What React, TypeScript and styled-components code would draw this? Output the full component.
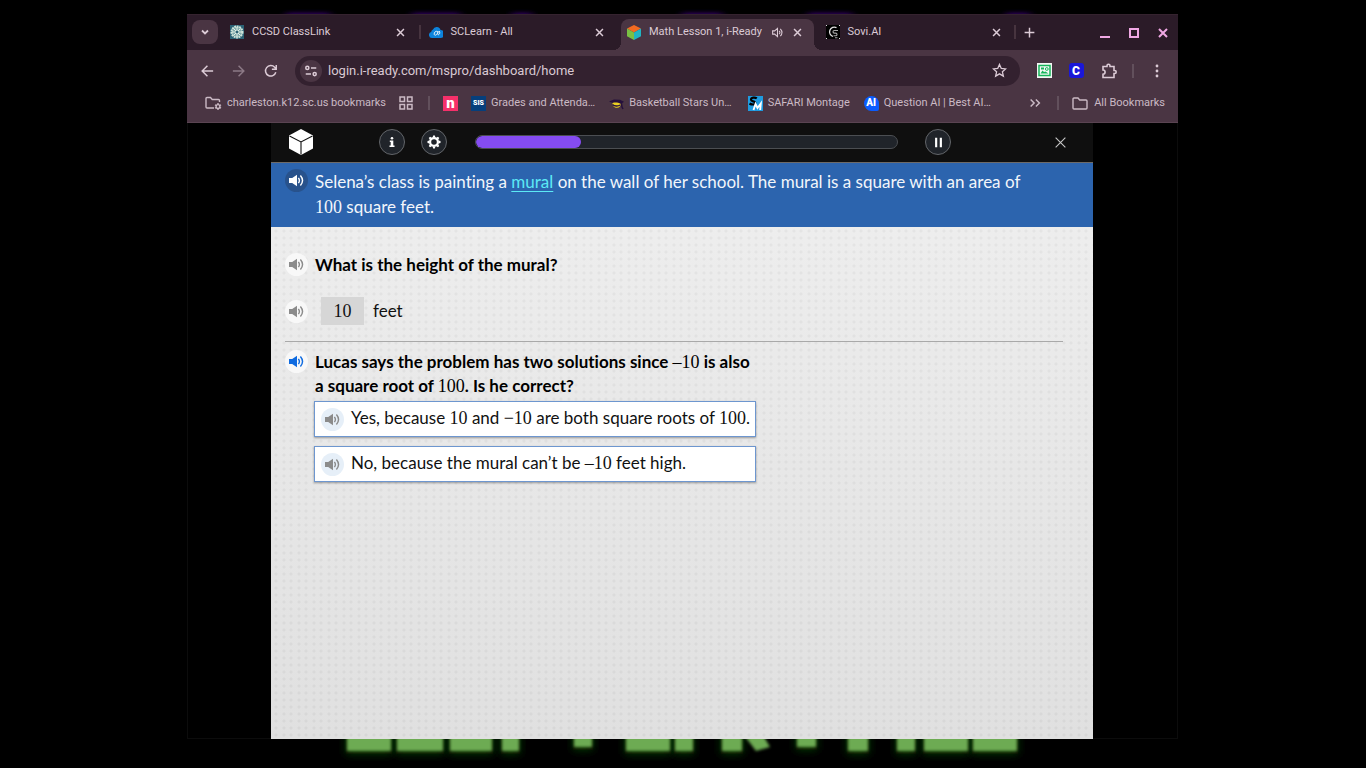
import React from 'react';
import styled, { createGlobalStyle, css } from 'styled-components';

const UI = `Roboto, 'Liberation Sans', sans-serif`;
const LESSON = `Lato, 'Open Sans', sans-serif`;
const MATH = `'Liberation Serif', 'Times New Roman', serif`;

const GlobalStyle = createGlobalStyle`
  *, *::before, *::after { box-sizing: border-box; }
  body { margin: 0; background: #000; }
  button, input { font: inherit; color: inherit; margin: 0; padding: 0; border: 0; background: none; }
  button { cursor: pointer; }
  a { color: inherit; text-decoration: none; }
  p, h2 { margin: 0; }
  svg { display: block; flex: none; }
`;

/* ---------- desktop and window ---------- */

const Desktop = styled.div`
  position: relative;
  display: grid;
  grid-template-columns: 187fr 991fr 188fr;
  min-height: 100vh;
  padding: 14px 0 29px;
  background: #000;
  overflow: hidden;
`;

const Wallpaper = styled.svg<{ $edge: 'top' | 'bottom' }>`
  position: absolute;
  left: 0;
  width: 100%;
  ${(p) => (p.$edge === 'top' ? 'top: 0; height: 20px;' : 'bottom: 0; height: 48px;')}
`;

const BrowserWindow = styled.div`
  position: relative;
  grid-column: 2;
  display: flex;
  flex-direction: column;
  min-width: 0;
  background: #000;
  font-family: ${UI};
  color: #dccbd6;
  box-shadow: inset 1px 0 #0c0c0c, inset -1px -1px #0c0c0c;
`;

/* ---------- tab strip ---------- */

const TabStrip = styled.div`
  display: flex;
  align-items: stretch;
  height: 36px;
  padding-left: 5px;
  background: #2b1b28;
  border-top: 1px solid #35232f;
`;

const TabSearch = styled.button`
  display: grid;
  place-items: center;
  flex: none;
  width: 26px;
  height: 24px;
  margin: 5px 4px 0 0;
  border-radius: 8px;
  background: #4a3543;
`;

const Tabs = styled.div`
  display: flex;
  flex: 0 1 794px;
  min-width: 0;
`;

const TabSlot = styled.div<{ $divider?: boolean }>`
  position: relative;
  display: flex;
  flex: 1 1 0;
  min-width: 0;
  padding: 4px 4px 0 2px;
  ${(p) => p.$divider && css`
    &::after {
      content: '';
      position: absolute;
      right: 0;
      top: 10px;
      width: 2px;
      height: 14px;
      background: #47343f;
    }
  `}
`;

const Tab = styled.div<{ $active?: boolean }>`
  position: relative;
  display: flex;
  align-items: center;
  gap: 4px;
  flex: 1;
  min-width: 0;
  padding: 0 8px 5px 6px;
  ${(p) => p.$active && css`
    background: #4a3543;
    border-radius: 8px 8px 0 0;
    &::before, &::after {
      content: '';
      position: absolute;
      bottom: 0;
      width: 8px;
      height: 8px;
    }
    &::before { left: -8px; background: radial-gradient(circle at 0 0, transparent 8px, #4a3543 8px); }
    &::after { right: -8px; background: radial-gradient(circle at 100% 0, transparent 8px, #4a3543 8px); }
  `}
`;

const TabTitle = styled.button`
  display: flex;
  align-items: center;
  gap: 8px;
  flex: 1;
  min-width: 0;
  font-size: 11px;
  line-height: 16px;
  white-space: nowrap;
  text-align: left;
`;

const IconButton = styled.button<{ $w?: number }>`
  display: grid;
  place-items: center;
  flex: none;
  width: ${(p) => p.$w ?? 16}px;
  height: 16px;
`;

const NewTab = styled(IconButton)`
  margin: 9px 0 0 5px;
`;

const WindowControls = styled.div`
  display: flex;
  gap: 13px;
  margin: 10px 7px 0 auto;
  color: #f0a8e4;
`;

/* ---------- toolbar ---------- */

const Toolbar = styled.div`
  display: flex;
  align-items: center;
  height: 41px;
  padding: 0 13px 0 12px;
  background: #4a3543;
`;

const NavButtons = styled.div`
  display: flex;
  gap: 16px;
  margin-right: 16px;
`;

const Omnibox = styled.form`
  display: flex;
  align-items: center;
  flex: 1;
  min-width: 0;
  height: 30px;
  padding: 0 13px 0 5px;
  border-radius: 15px;
  background: #33212f;
`;

const SiteInfo = styled.button`
  display: grid;
  place-items: center;
  flex: none;
  width: 22px;
  height: 22px;
  margin-right: 6px;
  border-radius: 50%;
  background: #4a3543;
`;

const UrlInput = styled.input`
  flex: 1;
  min-width: 0;
  height: 20px;
  font-size: 13px;
  line-height: 20px;
  outline: none;
  color: #d9c9d3;
`;

const Extensions = styled.div`
  display: flex;
  align-items: center;
  gap: 16px;
  margin: 0 14px 0 16px;
`;

const Rule = styled.span`
  flex: none;
  width: 2px;
  height: 14px;
  background: #62505c;
`;

const MenuButton = styled(IconButton)`
  margin-left: 15px;
`;

const BookmarkBar = styled.nav`
  display: flex;
  align-items: center;
  height: 32px;
  padding: 0 13px 7px 18px;
  background: #4a3543;
  border-bottom: 1px solid #5a4452;
  font-size: 11px;
  line-height: 16px;
  white-space: nowrap;
  color: #cbbac5;
`;

const Bookmark = styled.a<{ $gap?: number }>`
  display: flex;
  align-items: center;
  gap: 5px;
  margin-right: ${(p) => p.$gap ?? 14}px;
`;

const MoreBookmarks = styled(IconButton)`
  margin: 0 14px 0 auto;
`;

const BookmarkRule = styled(Rule)`
  margin-right: 13px;
`;

/* ---------- lesson page ---------- */

const Viewport = styled.div`
  display: grid;
  grid-template-columns: 84fr 822fr 85fr;
  flex: 1;
`;

const Lesson = styled.main`
  grid-column: 2;
  display: flex;
  flex-direction: column;
  min-width: 0;
  font-family: ${LESSON};
  font-size: 17px;
  line-height: 24px;
  font-variant-ligatures: none;
  color: #111;
  background-color: #e6e6e6;
  background-image:
    radial-gradient(circle at 5px 3px, rgba(0, 0, 0, 0.04) 1px, transparent 2px),
    radial-gradient(circle at 13px 3px, rgba(0, 0, 0, 0.04) 1px, transparent 2px),
    linear-gradient(#f0f0f0, #e0e0e0);
  background-size: 15px 7px, 15px 7px, 100% 100%;
`;

const LessonHeader = styled.header`
  display: flex;
  align-items: center;
  height: 40px;
  padding: 0 25px 1px 18px;
  background: #0f0f0f;
  border-bottom: 1px solid #6d6a68;
  color: #fff;
`;

const RoundButton = styled.button`
  display: grid;
  place-items: center;
  flex: none;
  width: 26px;
  height: 26px;
  border: 1px solid #63666a;
  border-radius: 50%;
  background: #20242a;
`;

const HeaderTools = styled.div`
  display: flex;
  gap: 16px;
  margin: 0 28px 0 66px;
`;

const Progress = styled.div`
  flex: 1;
  height: 14px;
  margin-right: 27px;
  border: 1px solid #4b4e52;
  border-radius: 7px;
  background: #20242a;
  overflow: hidden;
`;

const ProgressFill = styled.div`
  height: 100%;
  border-radius: 7px;
  background: #854cf2;
`;

const CloseLesson = styled(IconButton)`
  margin-left: 101px;
  color: #c6c6c6;
`;

const Prompt = styled.section`
  display: flex;
  gap: 7px;
  padding: 6px 54px 8px 14px;
  background: #2c64ae;
  color: #f2f6fb;
  line-height: 25px;
`;

const Term = styled.a`
  color: #5ce9f5;
  text-decoration: underline;
  text-decoration-thickness: 1px;
  text-underline-offset: 3px;
`;

const Num = styled.span`
  font-family: ${MATH};
  font-size: 18px;
  font-weight: 400;
  line-height: 1;
`;

const AudioButton = styled.button<{ $tone: 'dark' | 'light' | 'tint'; $on?: boolean }>`
  display: grid;
  place-items: center;
  flex: none;
  width: 23px;
  height: 23px;
  border-radius: 50%;
  background: ${(p) => ({ dark: '#28528c', light: '#f8f8f8', tint: '#e6eff8' })[p.$tone]};
  color: ${(p) => (p.$on ? '#0f6be0' : p.$tone === 'dark' ? '#fff' : '#8b8b8b')};
`;

const Work = styled.section`
  flex: 1;
  padding: 26px 30px 40px 14px;
`;

const Line = styled.div`
  display: flex;
  align-items: flex-start;
  gap: 7px;
`;

const Question = styled.h2`
  font-size: 17px;
  line-height: 24px;
  font-weight: 700;
  color: #000;
`;

const AnswerLine = styled(Line)`
  align-items: center;
  height: 28px;
  margin: 20px 0 16px;
`;

const AnswerLabel = styled.label`
  display: flex;
  align-items: center;
  gap: 9px;
  padding-left: 6px;
`;

const AnswerInput = styled.input`
  width: 43px;
  height: 28px;
  background: #d6d6d6;
  font-family: ${MATH};
  font-size: 18px;
  text-align: center;
`;

const Divider = styled.hr`
  height: 1px;
  margin: 0 0 8px;
  border: 0;
  background: #a9a9a9;
`;

const Choices = styled.div`
  display: flex;
  flex-direction: column;
  gap: 9px;
  width: 442px;
  max-width: 100%;
  margin: 3px 0 0 29px;
`;

const Choice = styled.div`
  display: flex;
  align-items: center;
  gap: 7px;
  height: 36px;
  padding-left: 6px;
  border: 1px solid #6d96cf;
  background: #fff;
  box-shadow: 0 1px 2px rgba(0, 0, 0, 0.35);
`;

const ChoiceText = styled.button`
  flex: 1;
  text-align: left;
  white-space: nowrap;
  padding-bottom: 2px;
`;

/* ---------- icons ---------- */

type StrokeProps = { d: string; size?: number; w?: number; box?: number };
const Stroke = ({ d, size = 14, w = 2, box = 16 }: StrokeProps) => (
  <svg width={size} height={size} viewBox={`0 0 ${box} ${box}`} fill="none" stroke="currentColor" strokeWidth={w} aria-hidden>
    <path d={d} />
  </svg>
);

const CROSS = 'M3 3l10 10M13 3L3 13';

const Speaker = () => (
  <svg width="15" height="13" viewBox="0 0 15 13" aria-hidden>
    <path d="M0 4h3.2L8 .8v11.4L3.2 9H0z" fill="currentColor" />
    <path d="M9.4 3.8q2 2.700 0 5.400M11.400 1.500q4.300 5 0 10" fill="none" stroke="currentColor" strokeWidth="1.400" />
  </svg>
);

const GridIcon = () => (
  <svg width="14" height="14" viewBox="0 0 14 14" fill="none" stroke="currentColor" strokeWidth="1.500" aria-hidden>
    <path d="M1 1h4.500v4.500H1zM8.500 1H13v4.500H8.500zM1 8.500h4.500V13H1zM8.500 8.500H13V13H8.500z" />
  </svg>
);

const gearTeeth = [0, 45, 90, 135, 180, 225, 270, 315];
const Gear = () => (
  <svg width="14" height="14" viewBox="-7 -7 14 14" aria-hidden>
    <circle r="3.900" fill="none" stroke="currentColor" strokeWidth="2.200" />
    {gearTeeth.map((a) => (
      <path key={a} d="M-1.400 -4.500L-.9 -6.500H.9L1.400 -4.500z" fill="currentColor" transform={`rotate(${a})`} />
    ))}
  </svg>
);

const ClassLinkIcon = () => (
  <svg width="14" height="14" viewBox="0 0 14 14" aria-hidden>
    <rect width="14" height="14" fill="#2b6275" />
    <circle cx="7" cy="7" r="5.500" fill="#7fa9ab" stroke="#cfe4da" strokeWidth="2" strokeDasharray="1.800 .7" />
    <path d="M7 2v10M2 7h10M3.500 3.500l7 7M10.500 3.500l-7 7" stroke="#e3f0e6" strokeWidth="1" />
    <circle cx="7" cy="7" r="1.300" fill="#2b6275" />
  </svg>
);

const CloudIcon = () => (
  <svg width="14" height="14" viewBox="0 0 14 14" aria-hidden>
    <path d="M3 13a3 3 0 0 1-.8-5.900A3 3 0 0 1 4 4.500 3.900 3.900 0 0 1 11.500 5 4 4 0 0 1 11.300 13z" fill="#0c83dc" />
    <path d="M8.800 6.500c-2-.8-4 .8-3.600 2.800.3 1.500 2.200 1 3-.5L9.200 6.500c-.8 2-.7 3.700.4 3.200 1.200-.6 1.600-2.200.6-3.700" fill="none" stroke="#e4f3fd" strokeWidth="1" />
  </svg>
);

const ReadyIcon = () => (
  <svg width="14" height="15" viewBox="0 0 14 15" aria-hidden>
    <path d="M7 0l7 3.500L7 7.500 0 3.500z" fill="#f26a21" />
    <path d="M0 3.500l7 4V15l-7-3.800z" fill="#7ac143" />
    <path d="M14 3.500l-7 4V15l7-3.800z" fill="#1fb5c4" />
  </svg>
);

const SoviIcon = () => (
  <svg width="14" height="14" viewBox="0 0 14 14" aria-hidden>
    <rect width="14" height="14" fill="#000" />
    <path d="M10.500 2.600A4.800 4.800 0 1 0 7 11.500" fill="none" stroke="#e0e0e0" strokeWidth="1.300" />
    <path d="M12 5.500H8.300a1.200 1.200 0 0 0 0 2.600h1.400a1.300 1.300 0 0 1 0 2.600H7.500M9 12.700h2.500" fill="none" stroke="#a5a5a5" strokeWidth="1.100" />
    <path d="M0 0h1v1H0zM13 0h1v1h-1zM0 13h1v1H0zM13 13h1v1h-1z" fill="#ddd" />
  </svg>
);

const Badge = styled.span<{ $bg: string; $size: number; $radius?: string }>`
  display: grid;
  place-items: center;
  flex: none;
  width: 15px;
  height: 15px;
  border-radius: ${(p) => p.$radius ?? '0'};
  background: ${(p) => p.$bg};
  color: #fff;
  font-size: ${(p) => p.$size}px;
  line-height: 14px;
  font-weight: 900;
`;

const GradCap = () => (
  <svg width="15" height="15" viewBox="0 0 15 15" aria-hidden>
    <path d="M0 5.500L5 3.500l6 .3 4 2-2 1.400-9-.2z" fill="#25103c" />
    <path d="M3.500 7c2.500-.8 6-.5 8 .8.500 2.200-1 4-3.600 4S3.200 9.800 3.500 7z" fill="#ead022" />
    <path d="M3.500 8.500c2 1.800 5.500 2 7.500.5" stroke="#25103c" fill="none" strokeWidth="1.300" />
    <path d="M12.300 6.500l.7 4.500 1 2" stroke="#25103c" fill="none" strokeWidth="1.500" />
  </svg>
);

const SafariIcon = () => (
  <svg width="15" height="15" viewBox="0 0 15 15" aria-hidden>
    <rect width="15" height="15" fill="#1e9be0" />
    <path d="M8.800 2.400C7 1 3 1.300 3 3.700c0 2.100 4.500 1.300 4.200 3.400C7 9 3.500 8.800 1.500 7.500" fill="none" stroke="#000" strokeWidth="2.200" />
    <path d="M5.500 14l2-6 2 4 3.300-4.500-.6 6.500" fill="none" stroke="#fff" strokeWidth="1.900" />
  </svg>
);

const FolderIcon = ({ gear }: { gear?: boolean }) => (
  <svg width="17" height="14" viewBox="0 0 17 14" fill="none" stroke="currentColor" strokeWidth="1.400" aria-hidden>
    {gear ? (
      <>
        <path d="M9 12H2a1 1 0 0 1-1-1V2.500a1 1 0 0 1 1-1h3.500l1.700 2h6.300a1 1 0 0 1 1 1V6" />
        <circle cx="13" cy="10.500" r="1.900" />
        <path d="M13 7v1.500M13 12.500V14M10 8.800l1.300.7M14.700 11.500l1.300.7M16 8.800l-1.300.7M11.300 11.500l-1.300.7" />
      </>
    ) : (
      <path d="M2 2h4l1.700 2H14a1 1 0 0 1 1 1v7a1 1 0 0 1-1 1H2a1 1 0 0 1-1-1V3a1 1 0 0 1 1-1z" />
    )}
  </svg>
);

const Cube = () => (
  <svg width="24" height="26" viewBox="0 0 24 26" aria-hidden>
    <path d="M12 0l12 6.500v13L12 26 0 19.500v-13z" fill="#fff" />
    <path d="M.5 7L12 13l11.500-6M12 13v12.500" fill="none" stroke="#0f0f0f" strokeWidth="1.100" />
  </svg>
);

/* ---------- wallpaper lettering ---------- */

const greenBlocks: [number, number, number][] = [
  [347, 44, 31], [397, 46, 31], [450, 42, 31], [502, 17, 31], [574, 18, 27],
  [626, 44, 31], [675, 18, 31], [722, 20, 31], [797, 19, 27],
  [848, 20, 31], [897, 18, 31], [924, 44, 31], [973, 44, 31],
];
const purpleBlocks: [number, number][] = [[286, 44], [412, 48], [512, 20], [682, 40], [808, 44], [1006, 24]];

const WallpaperArt = () => (
  <>
    <Wallpaper $edge="top" viewBox="0 0 1366 20" preserveAspectRatio="none" aria-hidden>
      <filter id="glow" x="-30%" y="-100%" width="160%" height="300%"><feGaussianBlur stdDeviation="4 2" /></filter>
      {purpleBlocks.map(([x, w]) => (
        <rect key={x} x={x} y="13" width={w} height="8" fill="#34006a" filter="url(#glow)" />
      ))}
    </Wallpaper>
    <Wallpaper $edge="bottom" viewBox="0 0 1366 48" preserveAspectRatio="none" aria-hidden>
      <filter id="soft" x="-20%" y="-20%" width="140%" height="140%"><feGaussianBlur stdDeviation="1.500" /></filter>
      <filter id="halo" x="-30%" y="-30%" width="160%" height="180%"><feGaussianBlur stdDeviation="4" /></filter>
      {greenBlocks.map(([x, w, b]) => (
        <rect key={x} x={x - 1} y="6" width={w + 2} height={b - 3} fill="#0d3a06" filter="url(#halo)" />
      ))}
      {greenBlocks.map(([x, w, b]) => (
        <rect key={x} x={x} y="4" width={w} height={b - 4} fill="#6dab52" filter="url(#soft)" />
      ))}
      <path d="M740 10h20l10 17-14 4z" fill="#6dab52" filter="url(#soft)" />
      <path d="M362 19h15M413 19h14M464 19h14M641 19h15M988 19h15" stroke="#3f7a2a" strokeWidth="4" filter="url(#soft)" />
    </Wallpaper>
  </>
);

/* ---------- app ---------- */

const tabs = [
  { title: 'CCSD ClassLink', icon: <ClassLinkIcon />, divider: true },
  { title: 'SCLearn - All', icon: <CloudIcon /> },
  { title: 'Math Lesson 1, i-Ready', icon: <ReadyIcon />, active: true },
  { title: 'Sovi.AI', icon: <SoviIcon />, divider: true },
];

export default function App() {
  return (
    <Desktop>
      <GlobalStyle />
      <WallpaperArt />
      <BrowserWindow>
        <TabStrip>
          <TabSearch aria-label="Search tabs"><Stroke d="M4 6l4 4 4-4" size={12} w={2.4} /></TabSearch>
          <Tabs>
            {tabs.map((t) => (
              <TabSlot key={t.title} $divider={t.divider}>
                <Tab $active={t.active}>
                  <TabTitle>{t.icon}{t.title}</TabTitle>
                  {t.active && (
                    <IconButton aria-label="Mute tab">
                      <Stroke d="M2 6h2.500L8 3v10L4.500 10H2zM10 6q2 2 0 4M11.500 3.500q4 4.500 0 9" size={13} w={1.3} />
                    </IconButton>
                  )}
                  <IconButton aria-label="Close tab"><Stroke d={CROSS} size={11} w={2.2} /></IconButton>
                </Tab>
              </TabSlot>
            ))}
          </Tabs>
          <NewTab aria-label="New tab"><Stroke d="M8 2v12M2 8h12" size={13} w={1.8} /></NewTab>
          <WindowControls>
            <IconButton aria-label="Minimize"><Stroke d="M3 12h10" w={2} size={16} /></IconButton>
            <IconButton aria-label="Maximize"><Stroke d="M4 4h8v8H4z" w={2} size={16} /></IconButton>
            <IconButton aria-label="Close"><Stroke d="M4 4l8 8M12 4l-8 8" w={2} size={16} /></IconButton>
          </WindowControls>
        </TabStrip>

        <Toolbar>
          <NavButtons>
            <IconButton aria-label="Back"><Stroke d="M15 8H3M8.500 2L2.500 8l6 6" w={1.7} /></IconButton>
            <IconButton aria-label="Forward" disabled style={{ opacity: 0.45 }}><Stroke d="M1 8h12M7.500 2l6 6-6 6" w={1.7} /></IconButton>
            <IconButton aria-label="Reload"><Stroke d="M13.500 9.500A6 6 0 1 1 12.200 3.800L14 5.600M14 1v5H9" w={1.7} /></IconButton>
          </NavButtons>
          <Omnibox>
            <SiteInfo type="button" aria-label="Site information">
              <Stroke d="M2 4.500a1.800 1.800 0 1 0 3.600 0a1.800 1.800 0 1 0-3.600 0M8 4.500h6M10.400 11.500a1.800 1.800 0 1 0 3.600 0a1.800 1.800 0 1 0-3.600 0M2 11.500h6" size={14} w={1.7} />
            </SiteInfo>
            <UrlInput aria-label="Address" defaultValue="login.i-ready.com/mspro/dashboard/home" />
            <IconButton type="button" aria-label="Bookmark this page">
              <Stroke d="M8 1.500l1.900 4.300 4.700.5-3.500 3.100 1 4.600L8 11.600 3.900 14l1-4.600L1.400 6.300l4.700-.5z" size={15} w={1.4} />
            </IconButton>
          </Omnibox>
          <Extensions>
            <IconButton aria-label="Classroom extension">
              <svg width="15" height="15" viewBox="0 0 15 15"><rect width="15" height="15" fill="#f4f8f4" /><path d="M2 2.500h11v10H2z" fill="none" stroke="#15b45a" strokeWidth="1.500" /><path d="M3.500 10.500l2-3 1.500 1.500 1.500-.5 3 2zM4 4.500h3v2H4z" fill="#15b45a" /><circle cx="9.800" cy="6" r="1.400" fill="none" stroke="#15b45a" /></svg>
            </IconButton>
            <IconButton aria-label="Clever extension"><Badge $bg="#1a17d8" $size={12} $radius="3px">C</Badge></IconButton>
            <IconButton $w={18} aria-label="Extensions">
              <Stroke d="M2 3.500h4V2.800a1.500 1.500 0 0 1 3 0v.7h4v4h.7a1.500 1.500 0 0 1 0 3H13v4H2v-3.300a2 2 0 0 0 0-4.200z" size={16} w={1.6} />
            </IconButton>
          </Extensions>
          <Rule />
          <MenuButton aria-label="Menu">
            <svg width="4" height="14" viewBox="0 0 4 14" fill="currentColor"><circle cx="2" cy="2" r="1.400" /><circle cx="2" cy="7" r="1.400" /><circle cx="2" cy="12" r="1.400" /></svg>
          </MenuButton>
        </Toolbar>

        <BookmarkBar>
          <Bookmark href="#" $gap={13}><FolderIcon gear />charleston.k12.sc.us bookmarks</Bookmark>
          <Bookmark href="#" $gap={15} aria-label="Apps"><GridIcon /></Bookmark>
          <BookmarkRule />
          <Bookmark href="#" $gap={13} aria-label="Nearpod"><Badge $bg="#f5306a" $size={15}>n</Badge></Bookmark>
          <Bookmark href="#"><Badge $bg="#063f7c" $size={7}>SIS</Badge>Grades and Attenda…</Bookmark>
          <Bookmark href="#" $gap={16}><GradCap />Basketball Stars Un…</Bookmark>
          <Bookmark href="#"><SafariIcon />SAFARI Montage</Bookmark>
          <Bookmark href="#"><Badge $bg="#0a5cff" $size={10} $radius="50% 50% 2px 50%">AI</Badge>Question AI | Best AI…</Bookmark>
          <MoreBookmarks aria-label="More bookmarks"><Stroke d="M3 4l4 4-4 4M9 4l4 4-4 4" size={14} w={1.7} /></MoreBookmarks>
          <BookmarkRule />
          <Bookmark href="#" $gap={0}><FolderIcon />All Bookmarks</Bookmark>
        </BookmarkBar>

        <Viewport>
          <Lesson>
            <LessonHeader>
              <Cube />
              <HeaderTools>
                <RoundButton aria-label="Information">
                  <svg width="6" height="10" viewBox="0 0 6 10" fill="#fff"><circle cx="3" cy="1.300" r="1.300" /><path d="M.8 3.500h3.500V8.500H5.500V10H.5V8.500H1.700V5H.8z" /></svg>
                </RoundButton>
                <RoundButton aria-label="Settings"><Gear /></RoundButton>
              </HeaderTools>
              <Progress role="progressbar" aria-valuenow={25} aria-valuemin={0} aria-valuemax={100} aria-label="Lesson progress">
                <ProgressFill style={{ width: '25%' }} />
              </Progress>
              <RoundButton aria-label="Pause"><Stroke d="M5.500 3v10M10.500 3v10" w={2.3} size={15} /></RoundButton>
              <CloseLesson aria-label="Close lesson"><Stroke d="M2 2l12 12M14 2L2 14" w={1.4} size={13} /></CloseLesson>
            </LessonHeader>

            <Prompt>
              <AudioButton $tone="dark" aria-label="Read prompt"><Speaker /></AudioButton>
              <p>
                Selena’s class is painting a <Term href="#mural">mural</Term> on the wall of her school. The mural is a square with an area of <Num>100</Num> square feet.
              </p>
            </Prompt>

            <Work>
              <Line>
                <AudioButton $tone="light" aria-label="Read question"><Speaker /></AudioButton>
                <Question>What is the height of the mural?</Question>
              </Line>
              <AnswerLine>
                <AudioButton $tone="light" aria-label="Read answer"><Speaker /></AudioButton>
                <AnswerLabel><AnswerInput defaultValue="10" />feet</AnswerLabel>
              </AnswerLine>
              <Divider />
              <Line>
                <AudioButton $tone="light" $on aria-label="Read question"><Speaker /></AudioButton>
                <Question>
                  Lucas says the problem has two solutions since <Num>–10</Num> is also<br />
                  a square root of <Num>100</Num>. Is he correct?
                </Question>
              </Line>
              <Choices>
                <Choice>
                  <AudioButton $tone="tint" aria-label="Read choice"><Speaker /></AudioButton>
                  <ChoiceText>Yes, because <Num>10</Num> and <Num>−10</Num> are both square roots of <Num>100</Num>.</ChoiceText>
                </Choice>
                <Choice>
                  <AudioButton $tone="tint" aria-label="Read choice"><Speaker /></AudioButton>
                  <ChoiceText>No, because the mural can’t be <Num>–10</Num> feet high.</ChoiceText>
                </Choice>
              </Choices>
            </Work>
          </Lesson>
        </Viewport>
      </BrowserWindow>
    </Desktop>
  );
}
